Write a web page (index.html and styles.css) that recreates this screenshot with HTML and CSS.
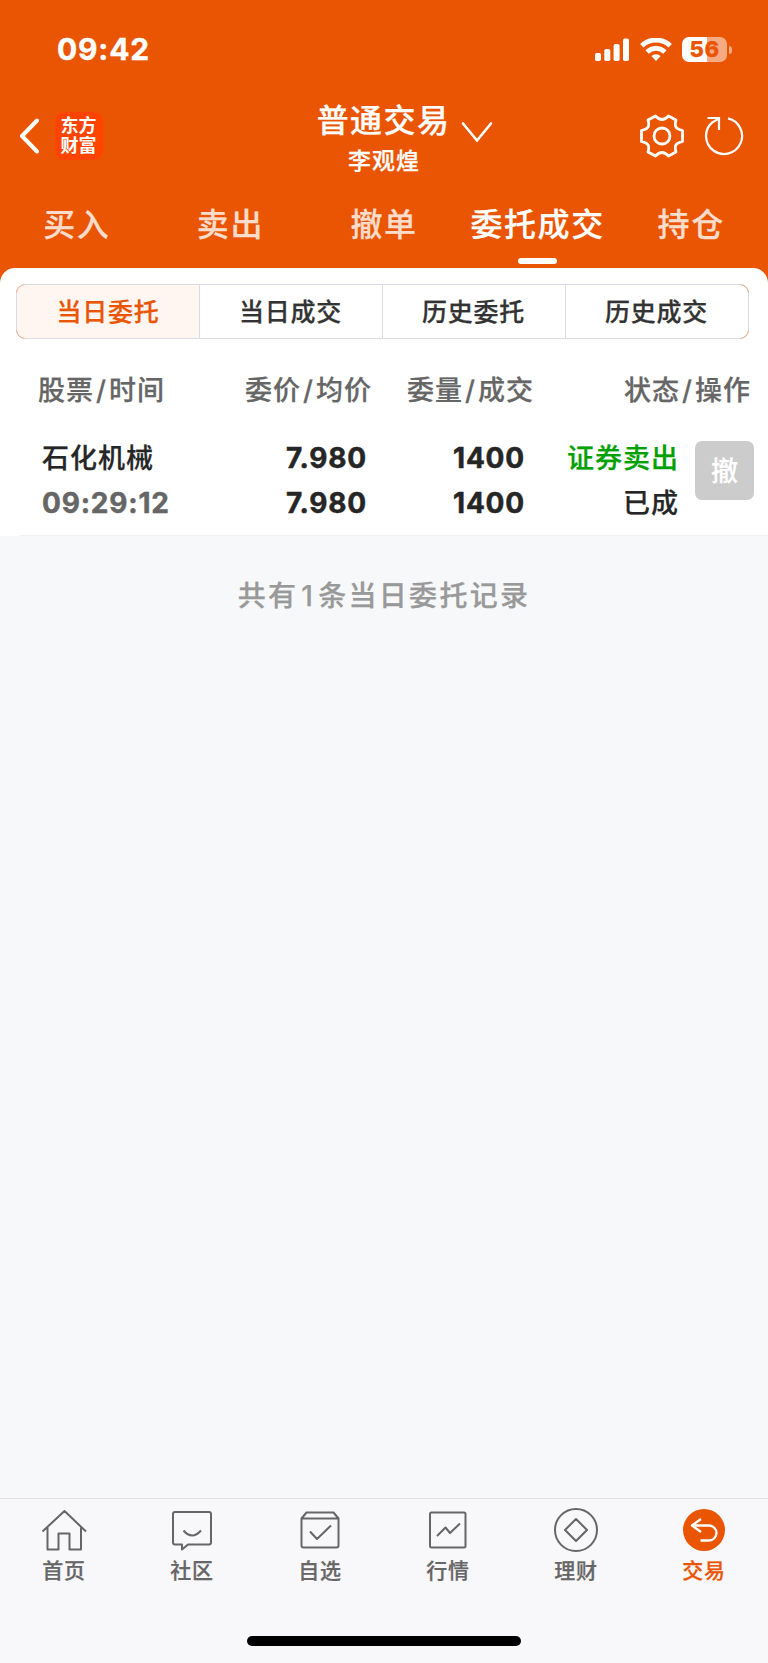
FILE: index.html
```html
<!DOCTYPE html>
<html lang="zh-CN">
<head>
    <meta charset="UTF-8">
    <meta name="viewport" content="width=device-width, initial-scale=1.0">
    <title>普通交易</title>
    <link rel="stylesheet" href="styles.css">
</head>
<body>
    <header class="header">
        <div class="status">
            <span class="time">09:42</span>
            <div class="status-icons">
                <svg class="signal" width="34" height="23" viewBox="0 0 34 23" fill="#fff">
                    <rect x="0" y="15" width="6" height="8" rx="1.8"/>
                    <rect x="9.3" y="11" width="6" height="12" rx="1.8"/>
                    <rect x="18.6" y="6" width="6" height="17" rx="1.8"/>
                    <rect x="28" y="0.5" width="6" height="22.5" rx="1.8"/>
                </svg>
                <svg class="wifi" width="32" height="23" viewBox="0 0 32 23">
                    <g fill="none" stroke="#fff" stroke-width="4.8">
                        <path d="M1.8 7.7a20.5 20.5 0 0 1 28.4 0"/>
                        <path d="M7.1 14a12.8 12.8 0 0 1 17.8 0"/>
                    </g>
                    <path d="M11.4 18.1a6.7 6.7 0 0 1 9.2 0L16 23z" fill="#fff"/>
                </svg>
                <div class="battery"><span>56</span></div>
            </div>
        </div>

        <div class="nav">
            <div class="nav-left">
                <svg width="20" height="36" viewBox="0 0 20 36" fill="none" stroke="#fff" stroke-width="4" stroke-linecap="round" stroke-linejoin="round">
                    <path d="M18 2.5L3 18l15 15.5"/>
                </svg>
                <div class="logo"><span>东方</span><span>财富</span></div>
            </div>
            <div class="nav-title">
                <h1>普通交易</h1>
                <p>李观煌</p>
            </div>
            <div class="nav-right">
                <svg class="arrow" width="32" height="22" viewBox="0 0 32 22" fill="none" stroke="#fff" stroke-width="2.6" stroke-linecap="round">
                    <path d="M2 2.5l14 17L30 2.5"/>
                </svg>
                <svg class="gear" width="46" height="46" viewBox="-23 -23 46 46" fill="none" stroke="#fff" stroke-width="2.8" stroke-linejoin="round">
                    <path d="M-6.5-20Q0-13 6.5-20L14-16C12-9 14-7 20.5-5.5V5.5C14 7 12 9 14 16L6.5 20Q0 13-6.5 20L-14 16C-12 9-14 7-20.5 5.5V-5.5C-14-7-12-9-14-16Z"/>
                    <circle r="8"/>
                </svg>
                <svg class="refresh" width="42" height="42" viewBox="-21 -21 42 42" fill="none" stroke="#fff" stroke-width="2.2">
                    <path d="M4-17.6A18 18 0 1 1-12-13.4L-5-17.5"/>
                    <path d="M-16.5-18H-5V-6"/>
                </svg>
            </div>
        </div>

        <nav class="tabs">
            <a class="tab">买入</a>
            <a class="tab">卖出</a>
            <a class="tab">撤单</a>
            <a class="tab active">委托成交</a>
            <a class="tab">持仓</a>
        </nav>
    </header>

    <main class="panel">
        <div class="segment">
            <a class="active">当日委托</a>
            <a>当日成交</a>
            <a>历史委托</a>
            <a>历史成交</a>
        </div>
        <div class="grid head">
            <div>股票<i>/</i>时间</div>
            <div>委价<i>/</i>均价</div>
            <div>委量<i>/</i>成交</div>
            <div>状态<i>/</i>操作</div>
        </div>
        <div class="grid order">
            <div class="name">石化机械<br><b class="clock">09:29:12</b></div>
            <div class="price"><b>7.980</b><br><b>7.980</b></div>
            <div class="amount"><b>1400</b><br><b>1400</b></div>
            <div class="state">
                <div><span class="sell">证券卖出</span><br>已成</div>
                <button class="cancel">撤</button>
            </div>
        </div>
        <div class="line"></div>
    </main>

    <p class="summary">共有<span>1</span>条当日委托记录</p>

    <footer class="tabbar">
        <div class="items">
            <a class="item">
                <svg width="46" height="46" viewBox="0 0 46 46">
                    <path d="M1.5 23.5L23.5 3 45 23.5M6.5 19.5V41.5H17.5V25.5H28.5V41.5H40V19.5"/>
                </svg>
                首页
            </a>
            <a class="item">
                <svg width="46" height="46" viewBox="0 0 46 46">
                    <path d="M6 4H40a2 2 0 0 1 2 2V34.5a2 2 0 0 1-2 2H19L13 41.5V36.5H6a2 2 0 0 1-2-2V6a2 2 0 0 1 2-2zM14.5 22.5q8.500 10 17.5 0"/>
                </svg>
                社区
            </a>
            <a class="item">
                <svg width="46" height="46" viewBox="0 0 46 46">
                    <path d="M4.5 10.5L9.5 4.5H36.5L41.5 10.5V37.5a2 2 0 0 1-2 2H6.5a2 2 0 0 1-2-2zM4.5 10.5H41.5M13 23.5L20 31 34 17.5"/>
                </svg>
                自选
            </a>
            <a class="item">
                <svg width="46" height="46" viewBox="0 0 46 46">
                    <rect x="5" y="4.5" width="35.5" height="35" rx="1.5"/>
                    <path d="M12 28L20.5 19.5 25 25 35 15.5"/>
                </svg>
                行情
            </a>
            <a class="item">
                <svg width="46" height="46" viewBox="0 0 46 46">
                    <circle cx="23" cy="22" r="21"/>
                    <path d="M23 11L34 22 23 33 12 22z"/>
                </svg>
                理财
            </a>
            <a class="item active">
                <svg width="46" height="46" viewBox="0 0 46 46">
                    <circle class="dot" cx="23" cy="22" r="21"/>
                    <path class="back" d="M20 11L11 17.5 20 24M11 17.5H28a7.5 7.5 0 0 1 0 15H19.5"/>
                </svg>
                交易
            </a>
        </div>
        <div class="home-bar"></div>
    </footer>
</body>
</html>
```
FILE: styles.css
```css
* {
    box-sizing: border-box;
    margin: 0;
    padding: 0;
}
body {
    display: flex;
    flex-direction: column;
    height: 1663px;
    background-color: #f7f8fa;
    color: #262626;
    font-family: Inter, "Noto Sans CJK SC", sans-serif;
    font-weight: 500;
    -webkit-text-stroke: 0.25px;
    overflow: hidden;
}
svg {
    display: block;
    flex: none;
}

/* header */
.header {
    height: 284px;
    background-color: #ea5504;
    color: #fff;
    flex: none;
}
.status {
    display: flex;
    justify-content: space-between;
    align-items: center;
    height: 98px;
    padding: 0 41px 0 57px;
}
.time {
    font-size: 30px;
    font-weight: 700;
    letter-spacing: 0.8px;
    -webkit-text-stroke: 0.4px;
}
.status-icons {
    display: flex;
    align-items: center;
}
.wifi { margin-left: 11px; }
.battery {
    position: relative;
    width: 45px;
    height: 25px;
    margin-left: 10px;
    border-radius: 7px;
    background: linear-gradient(90deg, #fff 25px, #f6aa82 25px);
    color: #ea5504;
    font-size: 22px;
    font-weight: 800;
    letter-spacing: 0.5px;
    line-height: 25px;
    text-align: center;
}
.battery::after {
    content: "";
    position: absolute;
    left: 47px;
    top: 9px;
    width: 3px;
    height: 8px;
    border-radius: 0 4px 4px 0;
    background-color: #f6aa82;
}
.nav {
    display: grid;
    grid-template-columns: 1fr 134px 1fr;
    height: 76px;
}
.nav-left {
    display: flex;
    align-items: center;
    padding-left: 19px;
}
.logo {
    display: flex;
    flex-direction: column;
    width: 48px;
    height: 48px;
    margin-left: 16px;
    padding: 4px 1px 0 0;
    border-radius: 9px;
    background-color: #ff4400;
    font-size: 18px;
    font-weight: 700;
    line-height: 20px;
    text-align: center;
    -webkit-text-stroke: 0;
}
.nav-title {
    padding-top: 5px;
    text-align: center;
    white-space: nowrap;
}
.nav-title h1 {
    margin-left: -1px;
    font-size: 32px;
    font-weight: 500;
    letter-spacing: 1.4px;
    line-height: 36px;
}
.nav-title p {
    margin-top: 9px;
    font-size: 23px;
    letter-spacing: 1px;
    line-height: 26px;
}
.nav-right {
    display: flex;
    align-items: center;
    padding-left: 10px;
}
.arrow { margin-top: -8px; }
.gear { margin-left: 146px; }
.refresh { margin-left: 18px; }
.tabs {
    display: grid;
    grid-template-columns: repeat(5, 1fr);
}
.tab {
    padding-top: 30px;
    color: #fcdccb;
    font-size: 32px;
    letter-spacing: 1.6px;
    line-height: 41px;
    text-align: center;
}
.tab.active { color: #fff; }
.tab.active::after {
    content: "";
    display: block;
    width: 39px;
    height: 6px;
    margin: 13px auto 0;
    border-radius: 3px;
    background-color: #fff;
}

/* order list */
.panel {
    height: 268px;
    margin-top: -16px;
    padding-top: 16px;
    border-radius: 15px 15px 0 0;
    background-color: #fff;
    flex: none;
}
.segment {
    position: relative;
    display: grid;
    grid-template-columns: 182px 183px 183px 1fr;
    height: 55px;
    margin: 0 19px 0 16px;
    border: 1px solid #d9dce2;
    border-radius: 9px;
}
/* orange rounded corners */
.segment::after {
    content: "";
    position: absolute;
    inset: -1px;
    border: 1px solid #ee9a70;
    border-radius: 9px;
    -webkit-mask:
        radial-gradient(circle at 0 0, #000 8px, transparent 9px),
        radial-gradient(circle at 100% 0, #000 8px, transparent 9px),
        radial-gradient(circle at 0 100%, #000 8px, transparent 9px),
        radial-gradient(circle at 100% 100%, #000 8px, transparent 9px);
}
.segment a {
    padding-top: 1px;
    color: #333;
    font-size: 25px;
    letter-spacing: 0.8px;
    line-height: 52px;
    text-align: center;
}
.segment a + a {
    padding-right: 1px;
    border-left: 1px solid #d9dce2;
}
.segment .active {
    border-radius: 8px 0 0 8px;
    background-color: #fff5f1;
    color: #ea5504;
}
.grid {
    display: grid;
    grid-template-columns: 180px 192px 162px 217px;
    text-align: right;
    white-space: nowrap;
}
.head {
    height: 84px;
    padding-top: 31px;
    color: #666;
    font-size: 27px;
    letter-spacing: 1px;
    line-height: 41px;
}
.head i {
    padding: 0 2px;
    font-style: normal;
}
.head div:first-child {
    padding-left: 38px;
    text-align: left;
}
.order {
    height: 112px;
    padding-top: 13px;
    font-size: 27px;
    letter-spacing: 1px;
    line-height: 45px;
}
.order b {
    font-size: 28px;
    font-weight: 700;
    letter-spacing: 0.8px;
    line-height: 1;
    -webkit-text-stroke: 0.5px;
}
.name {
    padding-left: 42px;
    text-align: left;
}
.order .clock { color: #666; }
.price { padding-right: 5px; }
.amount { padding-right: 9px; }
.state {
    display: flex;
    justify-content: flex-end;
    margin-right: -3px;
}
.sell { color: #00a000; }
.cancel {
    width: 59px;
    height: 59px;
    margin: 5px 0 0 16px;
    padding-bottom: 2px;
    border: none;
    border-radius: 7px;
    background-color: #ccc;
    color: #fff;
    font: 500 27px Inter, "Noto Sans CJK SC", sans-serif;
}
.line {
    height: 1px;
    margin-left: 20px;
    background-color: #f1f1f3;
}
.summary {
    flex: 1;
    padding-top: 40px;
    color: #999;
    font-size: 28px;
    letter-spacing: 2.3px;
    line-height: 41px;
    text-align: center;
}
.summary span { padding: 0 3px; }

/* bottom bar */
.tabbar {
    height: 165px;
    border-top: 1px solid #e2e2e4;
    background-color: #f8f8fa;
    flex: none;
}
.items {
    display: grid;
    grid-template-columns: repeat(6, 1fr);
    height: 137px;
    padding-top: 9px;
}
.item {
    display: flex;
    flex-direction: column;
    align-items: center;
    color: #666;
    font-size: 21px;
    letter-spacing: 0.8px;
    line-height: 34px;
}
.item svg {
    fill: none;
    stroke: #666;
    stroke-width: 2;
    stroke-linejoin: round;
    overflow: visible;
}
.item.active { color: #ea5504; }
.item .dot {
    fill: #ea5504;
    stroke: none;
}
.item .back {
    stroke: #fff;
    stroke-width: 2.3;
}
.home-bar {
    width: 274px;
    height: 10px;
    margin: 0 auto;
    border-radius: 5px;
    background-color: #000;
}
```
